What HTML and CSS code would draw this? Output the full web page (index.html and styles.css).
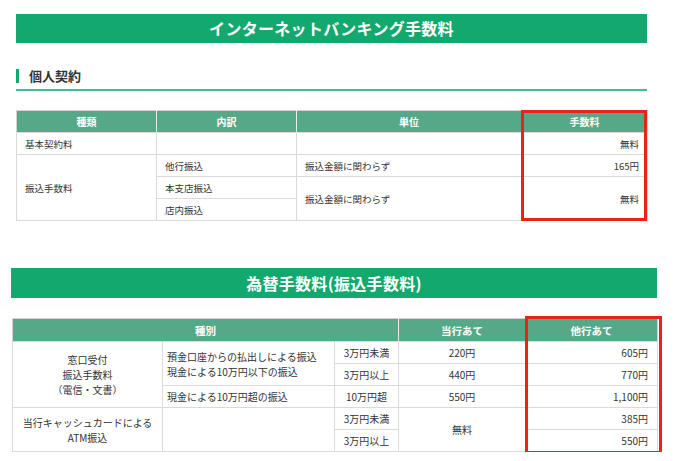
FILE: index.html
```html
<!DOCTYPE html>
<html lang="ja">
<head>
<meta charset="utf-8">
<link rel="stylesheet" href="styles.css">
</head>
<body>
<section class="sec sec1">
  <h1 class="banner banner1">インターネットバンキング手数料</h1>
  <h2 class="subhead"><span class="subhead-text">個人契約</span></h2>
  <div class="tablewrap tw1">
    <table class="fees fees1">
      <colgroup><col class="c1"><col class="c2"><col class="c3"><col class="c4"></colgroup>
      <thead>
        <tr><th>種類</th><th>内訳</th><th>単位</th><th>手数料</th></tr>
      </thead>
      <tbody>
        <tr><td>基本契約料</td><td></td><td></td><td class="r">無料</td></tr>
        <tr><td rowspan="3">振込手数料</td><td>他行振込</td><td>振込金額に関わらず</td><td class="r">165円</td></tr>
        <tr><td>本支店振込</td><td rowspan="2">振込金額に関わらず</td><td rowspan="2" class="r">無料</td></tr>
        <tr><td>店内振込</td></tr>
      </tbody>
    </table>
    <div class="redbox redbox1"></div>
  </div>
</section>
<section class="sec sec2">
  <h1 class="banner banner2">為替手数料(振込手数料)</h1>
  <div class="tablewrap tw2">
    <table class="fees fees2">
      <colgroup><col class="d1"><col class="d2"><col class="d3"><col class="d4"><col class="d5"></colgroup>
      <thead>
        <tr><th colspan="3">種別</th><th>当行あて</th><th>他行あて</th></tr>
      </thead>
      <tbody>
        <tr><td rowspan="3" class="c">窓口受付<br>振込手数料<br>（電信・文書）</td><td rowspan="2">預金口座からの払出しによる振込<br>現金による10万円以下の振込</td><td class="c">3万円未満</td><td class="c">220円</td><td class="r">605円</td></tr>
        <tr><td class="c">3万円以上</td><td class="c">440円</td><td class="r">770円</td></tr>
        <tr><td>現金による10万円超の振込</td><td class="c">10万円超</td><td class="c">550円</td><td class="r">1,100円</td></tr>
        <tr><td rowspan="2" class="c">当行キャッシュカードによる<br>ATM振込</td><td rowspan="2"></td><td class="c">3万円未満</td><td rowspan="2" class="c">無料</td><td class="r">385円</td></tr>
        <tr><td class="c">3万円以上</td><td class="r">550円</td></tr>
      </tbody>
    </table>
    <div class="redbox redbox2"></div>
  </div>
</section>
</body>
</html>
```
FILE: styles.css
```css
* { box-sizing: border-box; }
html, body { margin: 0; padding: 0; background: #fff; }
body {
  font-family: "Noto Sans CJK JP", "Noto Sans", sans-serif;
  color: #333;
}
.sec1 { margin: 0 27px 0 16px; padding-top: 14px; }
.sec2 { margin: 0 17px 0 11px; padding-top: 47px; }

.banner {
  margin: 0;
  background: #13a86e;
  color: #fff;
  font-size: 16px;
  font-weight: 700;
  text-align: center;
  letter-spacing: 0.3px;
}
.banner1 { height: 29px; line-height: 29px; }
.banner2 { height: 30px; line-height: 30px; }

.subhead {
  margin: 26px 0 0;
  padding: 0 0 6px;
  border-bottom: 2px solid #3cbf8f;
  font-size: 13px;
  font-weight: 700;
}
.subhead-text {
  display: block;
  border-left: 3px solid #13a86e;
  padding-left: 10px;
  line-height: 14px;
  height: 14px;
}

.tablewrap { position: relative; }
.tw1 { margin-top: 19px; }
.tw2 { margin-top: 20px; margin-left: 1px; }

.fees {
  width: 100%;
  border-collapse: collapse;
  table-layout: fixed;
  border: 1px solid #d2d2d2;
}
.fees th {
  background: #55a988;
  color: #fff;
  font-weight: 700;
  text-align: center;
  padding: 0;
  border-left: 1px solid #e2efe9;
}
.fees th:first-child { border-left: none; }
.fees td {
  border: 1px solid #dadada;
  padding: 0 8px;
  vertical-align: middle;
  background: #fff;
}
.fees td.r { text-align: right; }
.fees td.c { text-align: center; }

.fees1 { font-size: 9.5px; }
.fees1 th { font-size: 10px; height: 22px; }
.fees1 tbody tr { height: 22px; }
.fees1 td { line-height: 14px; }
.fees1 td.r { padding-right: 8px; }
.c1 { width: 140px; }
.c2 { width: 140px; }
.c3 { width: 225px; }
.c4 { width: 126px; }

.fees2 { font-size: 10px; }
.fees2 th { font-size: 10.5px; height: 23px; }
.fees2 tbody tr { height: 22px; }
.fees2 td { line-height: 15px; padding: 0 4px; }
.fees2 td.r { padding-right: 9px; }
.d1 { width: 150px; }
.d2 { width: 172px; }
.d3 { width: 64px; }
.d4 { width: 127px; }
.d5 { width: 132px; }

.redbox {
  position: absolute;
  border: 3px solid #e8231a;
  pointer-events: none;
}
.redbox1 { left: 505px; width: 126px; top: 0; bottom: 0; }
.redbox2 { left: 513px; width: 137px; top: -2px; bottom: -2px; }
```
